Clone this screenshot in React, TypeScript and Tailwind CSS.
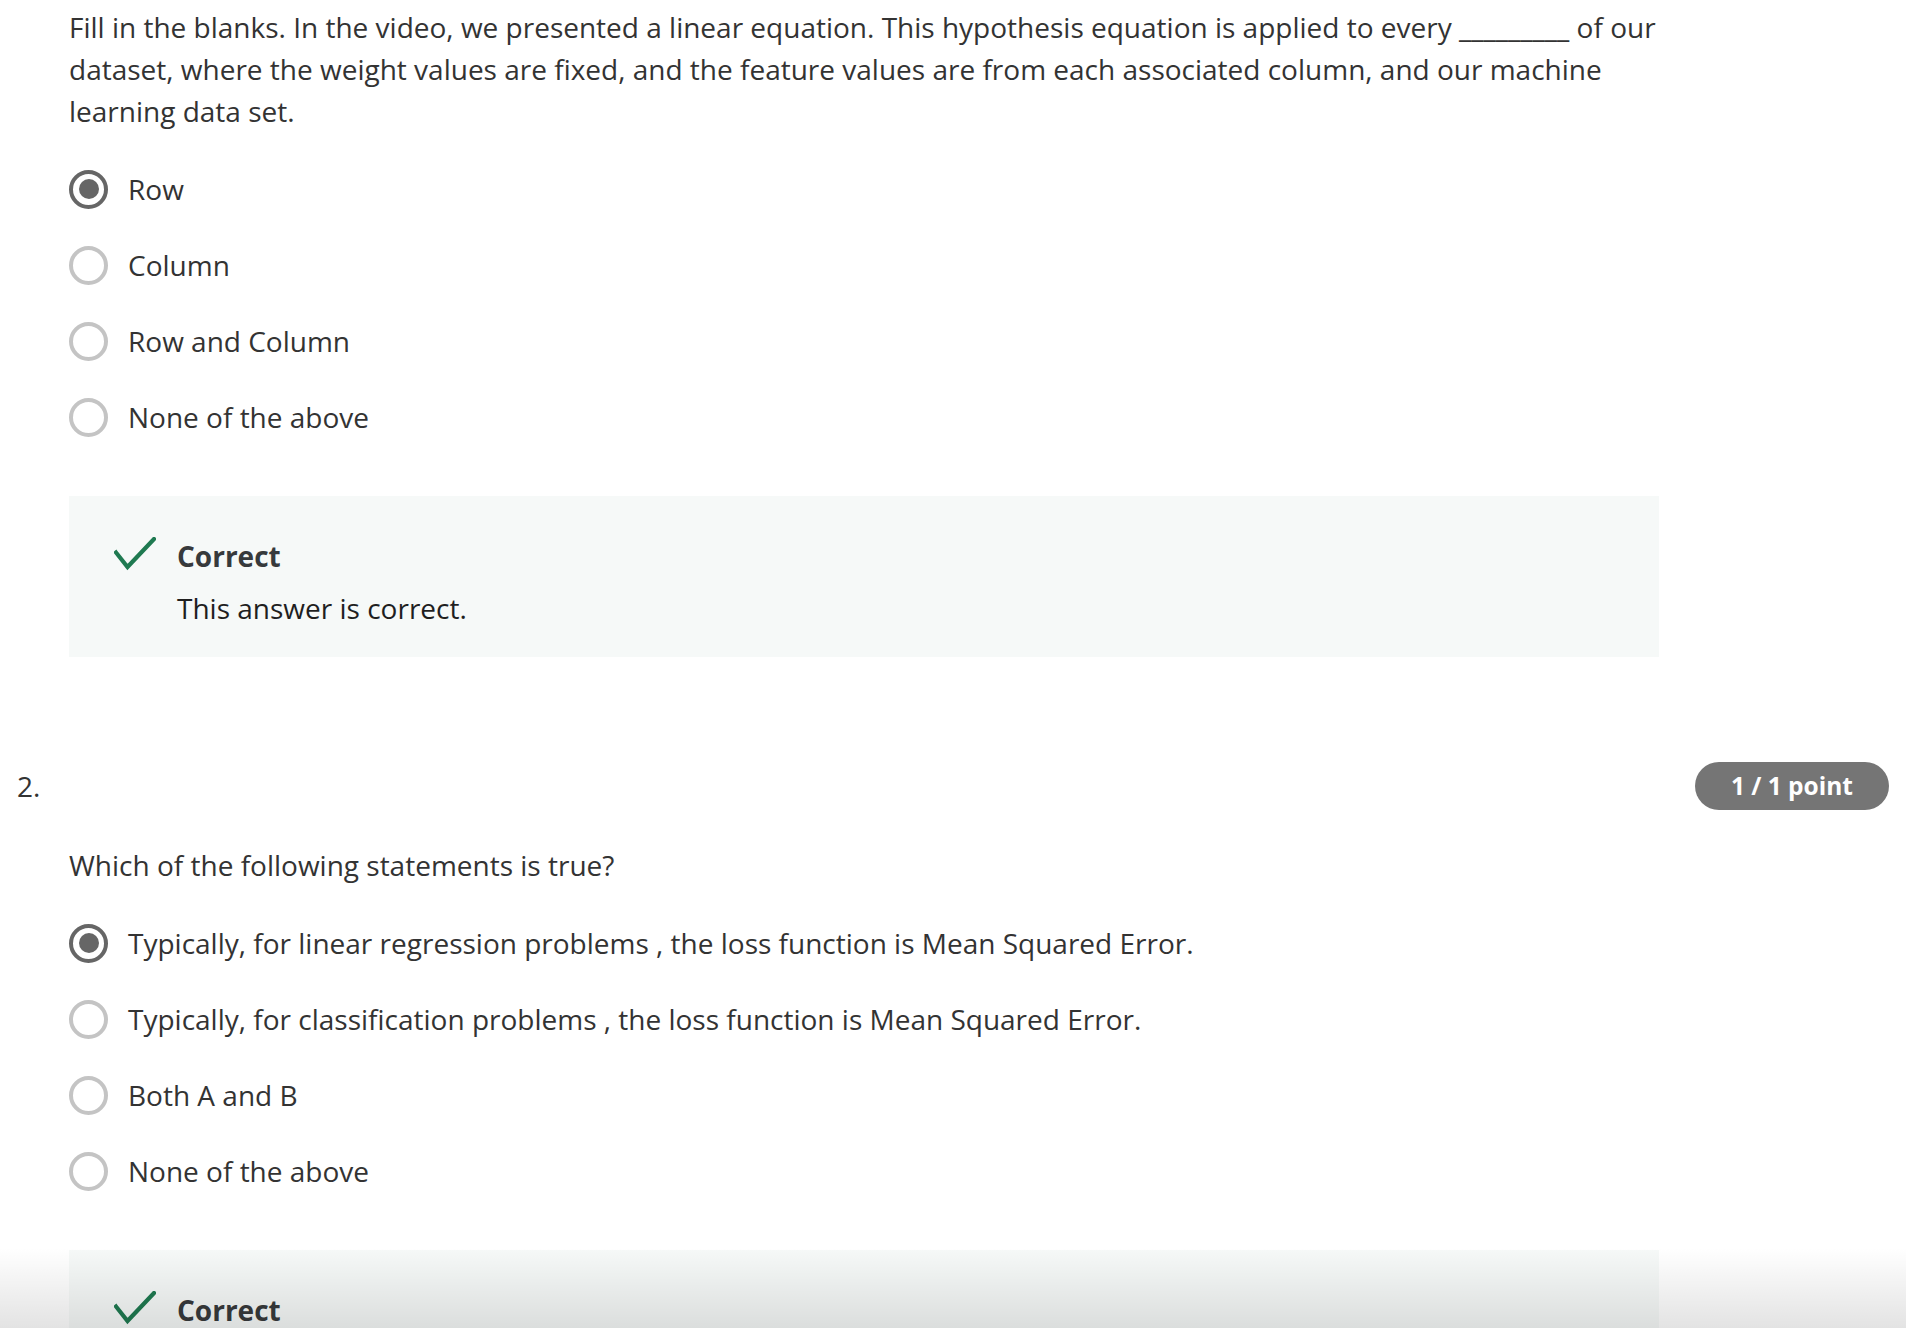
import React from "react";

type Question = {
  number?: string;
  points?: string;
  prompt: string;
  options: string[];
  selected: number;
};

const questions: Question[] = [
  {
    prompt:
      "Fill in the blanks. In the video, we presented a linear equation. This hypothesis equation is applied to every _________ of our dataset, where the weight values are fixed, and the feature values are from each associated column, and our machine learning data set.",
    options: ["Row", "Column", "Row and Column", "None of the above"],
    selected: 0,
  },
  {
    number: "2.",
    points: "1 / 1 point",
    prompt: "Which of the following statements is true?",
    options: [
      "Typically, for linear regression problems , the loss function is Mean Squared Error.",
      "Typically, for classification problems , the loss function is Mean Squared Error.",
      "Both A and B",
      "None of the above",
    ],
    selected: 0,
  },
];

const Radio = ({ checked }: { checked: boolean }) => (
  <span
    className={`flex items-center justify-center w-[39px] h-[39px] rounded-full border-[4px] shrink-0 ${
      checked ? "border-[#666666]" : "border-[#c4c4c4]"
    }`}
  >
    {checked && <span className="w-[20px] h-[20px] rounded-full bg-[#666666]" />}
  </span>
);

const CheckIcon = () => (
  <svg width="42" height="34" viewBox="0 0 42 34" fill="none">
    <path
      d="M2 15.5 L13.5 30 L40 2"
      stroke="#1f7a51"
      strokeWidth="4.2"
      strokeLinecap="square"
      strokeLinejoin="miter"
    />
  </svg>
);

const Feedback = () => (
  <div className="w-[1590px] bg-[#f6f9f8] pl-[45px] pt-[39px] pb-[28px] flex gap-[21px] mt-[41px]">
    <div className="pt-[2px]">
      <CheckIcon />
    </div>
    <div className="flex flex-col">
      <span className="font-bold text-[#373a3c] text-[28px] leading-[42px]">Correct</span>
      <span className="text-[#1f1f1f] text-[28px] leading-[42px] mt-[10px]">
        This answer is correct.
      </span>
    </div>
  </div>
);

const QuestionBlock = ({ q }: { q: Question }) => (
  <div className="flex flex-col">
    {q.number && (
      <div className="flex items-center justify-between h-[48px] mb-[34px]">
        <span className="text-[28px] leading-[42px] text-[#333333]">{q.number}</span>
        <span className="h-[48px] px-[36px] flex items-center rounded-full bg-[#757575] text-white font-bold text-[24.5px]">
          {q.points}
        </span>
      </div>
    )}
    <div className="ml-[52px] flex flex-col">
      <p className="w-[1600px] text-[28px] leading-[42px] text-[#333333]">{q.prompt}</p>
      <div className="flex flex-col mt-[19px]">
        {q.options.map((opt, i) => (
          <label key={i} className="flex items-center gap-[20px] h-[76px] cursor-pointer">
            <Radio checked={i === q.selected} />
            <span className="text-[28px] leading-[42px] text-[#333333]">{opt}</span>
          </label>
        ))}
      </div>
      <Feedback />
    </div>
  </div>
);

export default function App() {
  return (
    <div className="relative h-[1328px] overflow-hidden bg-white font-['Open_Sans',sans-serif]">
      <div className="flex flex-col gap-[105px] px-[17px] pt-[6px]">
        {questions.map((q, i) => (
          <QuestionBlock key={i} q={q} />
        ))}
      </div>
      <div className="absolute inset-x-0 bottom-0 h-[80px] bg-linear-to-b from-transparent to-black/[0.11]" />
    </div>
  );
}
